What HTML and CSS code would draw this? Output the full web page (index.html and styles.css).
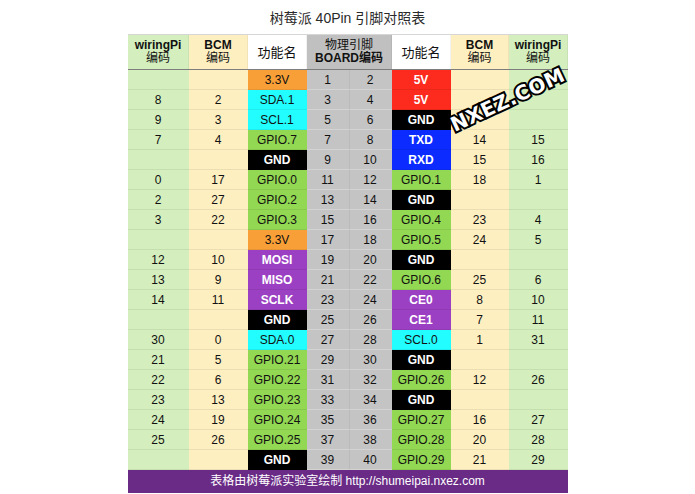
FILE: index.html
```html
<!DOCTYPE html>
<html lang="zh">
<head>
<meta charset="utf-8">
<title>树莓派 40Pin 引脚对照表</title>
<link rel="stylesheet" href="styles.css">
</head>
<body>
<div class="page">
  <h1 class="title">树莓派 40Pin 引脚对照表</h1>
  <div class="board">
    <table class="pins">
      <colgroup>
        <col class="c-wpi-l"><col class="c-bcm-l"><col class="c-fn-l"><col class="c-pin-l"><col class="c-pin-r"><col class="c-fn-r"><col class="c-bcm-r"><col class="c-wpi-r">
      </colgroup>
      <thead>
        <tr>
          <th class="wpi"><b>wiringPi</b><br>编码</th>
          <th class="bcm"><b>BCM</b><br>编码</th>
          <th class="fnh">功能名</th>
          <th class="pinh" colspan="2">物理引脚<br><b>BOARD编码</b></th>
          <th class="fnh">功能名</th>
          <th class="bcm"><b>BCM</b><br>编码</th>
          <th class="wpi"><b>wiringPi</b><br>编码</th>
        </tr>
      </thead>
      <tbody>
        <tr><td class="wpi"></td><td class="bcm"></td><td class="f orange">3.3V</td><td class="pin">1</td><td class="pin pr">2</td><td class="f red">5V</td><td class="bcm"></td><td class="wpi"></td></tr>
        <tr><td class="wpi">8</td><td class="bcm">2</td><td class="f cyan">SDA.1</td><td class="pin">3</td><td class="pin pr">4</td><td class="f red">5V</td><td class="bcm"></td><td class="wpi"></td></tr>
        <tr><td class="wpi">9</td><td class="bcm">3</td><td class="f cyan">SCL.1</td><td class="pin">5</td><td class="pin pr">6</td><td class="f black">GND</td><td class="bcm"></td><td class="wpi"></td></tr>
        <tr><td class="wpi">7</td><td class="bcm">4</td><td class="f gpio">GPIO.7</td><td class="pin">7</td><td class="pin pr">8</td><td class="f blue">TXD</td><td class="bcm">14</td><td class="wpi">15</td></tr>
        <tr><td class="wpi"></td><td class="bcm"></td><td class="f black">GND</td><td class="pin">9</td><td class="pin pr">10</td><td class="f blue">RXD</td><td class="bcm">15</td><td class="wpi">16</td></tr>
        <tr><td class="wpi">0</td><td class="bcm">17</td><td class="f gpio">GPIO.0</td><td class="pin">11</td><td class="pin pr">12</td><td class="f gpio">GPIO.1</td><td class="bcm">18</td><td class="wpi">1</td></tr>
        <tr><td class="wpi">2</td><td class="bcm">27</td><td class="f gpio">GPIO.2</td><td class="pin">13</td><td class="pin pr">14</td><td class="f black">GND</td><td class="bcm"></td><td class="wpi"></td></tr>
        <tr><td class="wpi">3</td><td class="bcm">22</td><td class="f gpio">GPIO.3</td><td class="pin">15</td><td class="pin pr">16</td><td class="f gpio">GPIO.4</td><td class="bcm">23</td><td class="wpi">4</td></tr>
        <tr><td class="wpi"></td><td class="bcm"></td><td class="f orange">3.3V</td><td class="pin">17</td><td class="pin pr">18</td><td class="f gpio">GPIO.5</td><td class="bcm">24</td><td class="wpi">5</td></tr>
        <tr><td class="wpi">12</td><td class="bcm">10</td><td class="f purple">MOSI</td><td class="pin">19</td><td class="pin pr">20</td><td class="f black">GND</td><td class="bcm"></td><td class="wpi"></td></tr>
        <tr><td class="wpi">13</td><td class="bcm">9</td><td class="f purple">MISO</td><td class="pin">21</td><td class="pin pr">22</td><td class="f gpio">GPIO.6</td><td class="bcm">25</td><td class="wpi">6</td></tr>
        <tr><td class="wpi">14</td><td class="bcm">11</td><td class="f purple">SCLK</td><td class="pin">23</td><td class="pin pr">24</td><td class="f purple">CE0</td><td class="bcm">8</td><td class="wpi">10</td></tr>
        <tr><td class="wpi"></td><td class="bcm"></td><td class="f black">GND</td><td class="pin">25</td><td class="pin pr">26</td><td class="f purple">CE1</td><td class="bcm">7</td><td class="wpi">11</td></tr>
        <tr><td class="wpi">30</td><td class="bcm">0</td><td class="f cyan">SDA.0</td><td class="pin">27</td><td class="pin pr">28</td><td class="f cyan">SCL.0</td><td class="bcm">1</td><td class="wpi">31</td></tr>
        <tr><td class="wpi">21</td><td class="bcm">5</td><td class="f gpio">GPIO.21</td><td class="pin">29</td><td class="pin pr">30</td><td class="f black">GND</td><td class="bcm"></td><td class="wpi"></td></tr>
        <tr><td class="wpi">22</td><td class="bcm">6</td><td class="f gpio">GPIO.22</td><td class="pin">31</td><td class="pin pr">32</td><td class="f gpio">GPIO.26</td><td class="bcm">12</td><td class="wpi">26</td></tr>
        <tr><td class="wpi">23</td><td class="bcm">13</td><td class="f gpio">GPIO.23</td><td class="pin">33</td><td class="pin pr">34</td><td class="f black">GND</td><td class="bcm"></td><td class="wpi"></td></tr>
        <tr><td class="wpi">24</td><td class="bcm">19</td><td class="f gpio">GPIO.24</td><td class="pin">35</td><td class="pin pr">36</td><td class="f gpio">GPIO.27</td><td class="bcm">16</td><td class="wpi">27</td></tr>
        <tr><td class="wpi">25</td><td class="bcm">26</td><td class="f gpio">GPIO.25</td><td class="pin">37</td><td class="pin pr">38</td><td class="f gpio">GPIO.28</td><td class="bcm">20</td><td class="wpi">28</td></tr>
        <tr><td class="wpi"></td><td class="bcm"></td><td class="f black">GND</td><td class="pin">39</td><td class="pin pr">40</td><td class="f gpio">GPIO.29</td><td class="bcm">21</td><td class="wpi">29</td></tr>
      </tbody>
    </table>
    <div class="footer">表格由树莓派实验室绘制 http://shumeipai.nxez.com</div>
    <div class="watermark">NXEZ.COM</div>
  </div>
</div>
</body>
</html>
```

FILE: styles.css
```css
* { box-sizing: border-box; }
html, body {
  margin: 0;
  padding: 0;
  background: #ffffff;
}
body {
  font-family: "Liberation Sans", Arial, "Noto Sans CJK SC", sans-serif;
  color: #111;
}
.page {
  width: 695px;
  height: 494px;
  overflow: hidden;
  display: flex;
  flex-direction: column;
  align-items: center;
}
.title {
  margin: 0;
  height: 34px;
  padding-top: 9px;
  font-size: 14px;
  line-height: 18px;
  font-weight: normal;
  color: #2a2a2a;
  font-family: "Liberation Sans", "Noto Sans CJK SC", sans-serif;
}
.board {
  position: relative;
  width: 440px;
}
.pins {
  width: 440px;
  table-layout: fixed;
  border-collapse: separate;
  border-spacing: 0;
}
.c-wpi-l { width: 61px; }
.c-bcm-l { width: 59px; }
.c-fn-l { width: 59px; }
.c-pin-l { width: 42px; }
.c-pin-r { width: 43px; }
.c-fn-r { width: 59px; }
.c-bcm-r { width: 58px; }
.c-wpi-r { width: 59px; }

.pins th {
  height: 36px;
  padding: 0;
  font-size: 12px;
  line-height: 13px;
  font-weight: normal;
  color: #111;
  text-align: center;
  vertical-align: middle;
  border-top: 1px solid #d6d6d6;
  border-bottom: 1px solid #7d7d7d;
  box-shadow: inset -1px 0 0 rgba(0,0,0,0.05);
  font-family: "Liberation Sans", "Noto Sans CJK SC", sans-serif;
}
.pins th b { font-weight: bold; }
.pins th.fnh { background: #ffffff; font-size: 13px; }
.pins th.pinh { background: #c0c0c0; }

.pins td {
  height: 20px;
  padding: 0;
  font-size: 12px;
  line-height: 20px;
  text-align: center;
  vertical-align: middle;
  white-space: nowrap;
  color: #111;
  box-shadow: inset 0 -1px 0 rgba(0,0,0,0.07);
}
.wpi { background: #d4efbd; }
.bcm { background: #feefc1; }
.pins td.pin { background: #c4c4c4; box-shadow: inset 0 -1px 0 rgba(255,255,255,0.25); }
.pins td.pr { box-shadow: inset 0 -1px 0 rgba(255,255,255,0.25), inset 1px 0 0 rgba(0,0,0,0.05); }

.f.orange { background: #f8a037; }
.f.cyan { background: #22feff; }
.f.gpio { background: #93d853; }
.f.black { background: #000; color: #fff; font-weight: bold; box-shadow: none; }
.f.red { background: #fc2b1e; color: #fff; font-weight: bold; }
.f.blue { background: #0c2cff; color: #fff; font-weight: bold; }
.f.purple { background: #9b40c2; color: #fff; font-weight: bold; }

.footer {
  height: 23px;
  background: #6a2b86;
  color: #fff;
  font-size: 12px;
  font-weight: normal;
  line-height: 23px;
  text-align: center;
  font-family: "Liberation Sans", "Noto Sans CJK SC", sans-serif;
}

.watermark {
  position: absolute;
  left: 318px;
  top: 54px;
  width: 122px;
  text-align: center;
  font-family: "DejaVu Sans", sans-serif;
  font-weight: bold;
  font-size: 20px;
  line-height: 24px;
  color: #fff;
  -webkit-text-stroke: 4px #000;
  paint-order: stroke fill;
  transform: rotate(-25deg);
  letter-spacing: 0.5px;
  white-space: nowrap;
}
```
